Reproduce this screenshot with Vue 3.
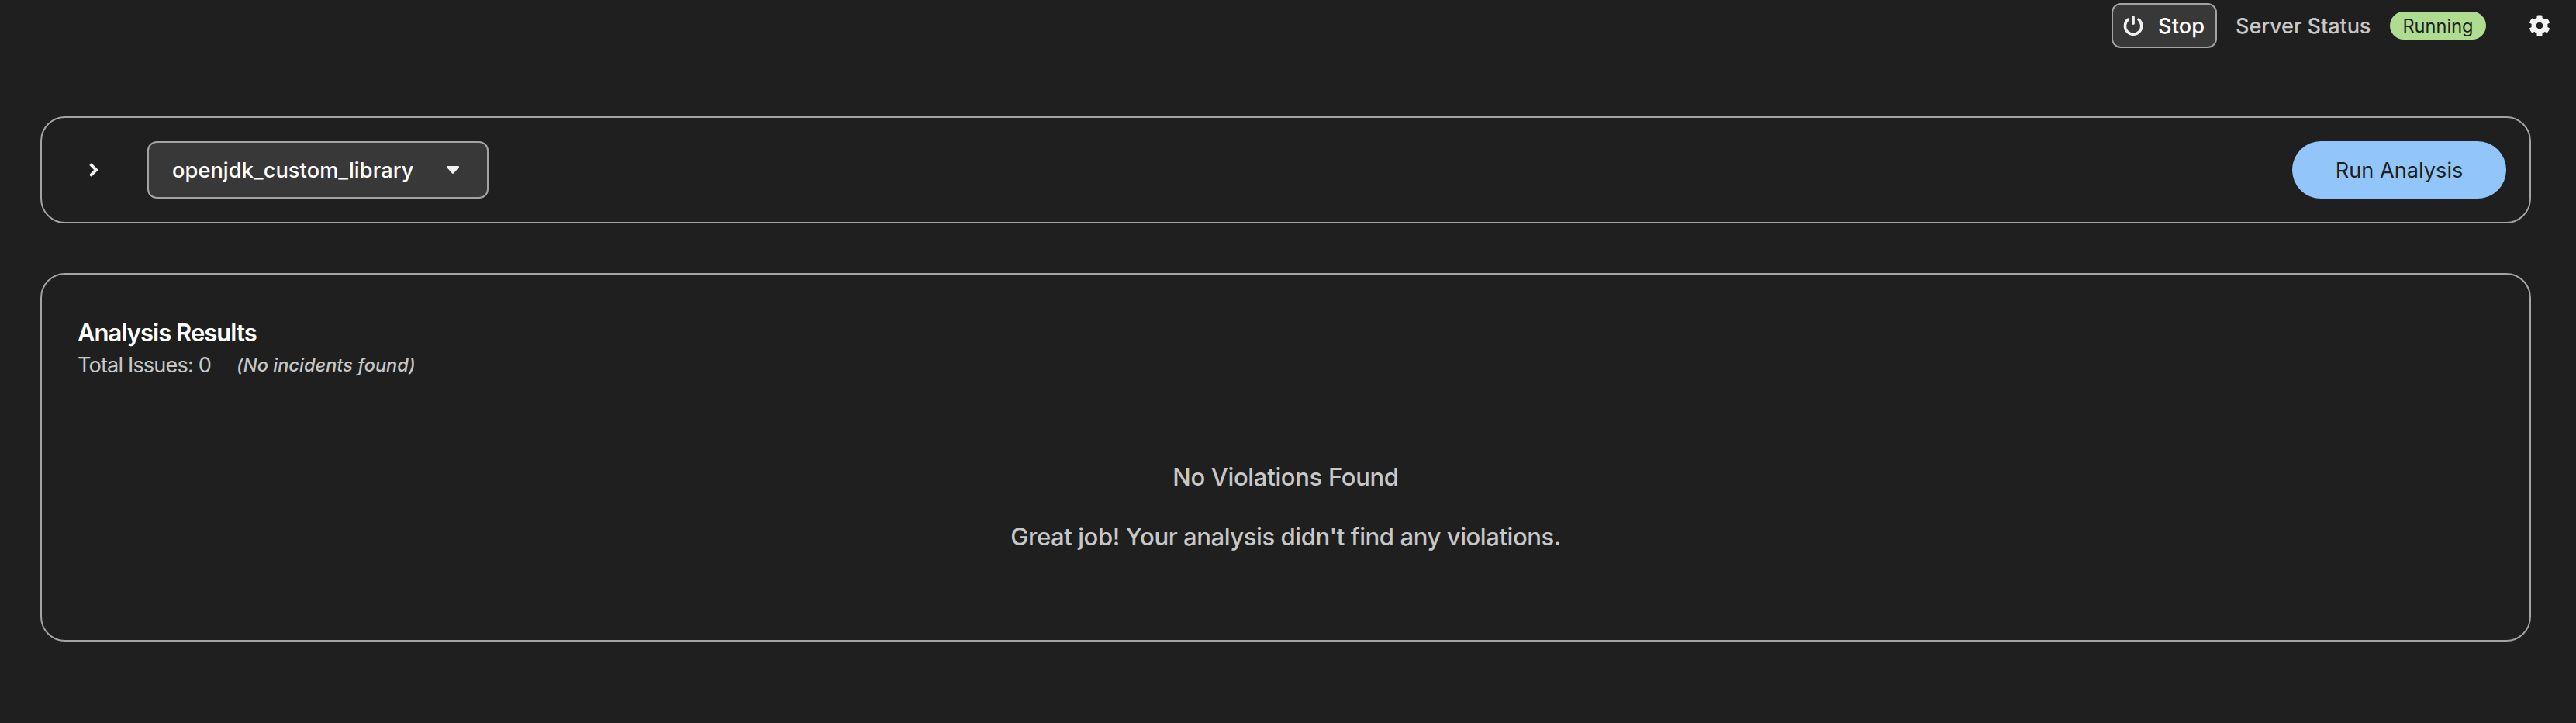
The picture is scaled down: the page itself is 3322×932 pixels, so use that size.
<script setup>
import { ref } from 'vue'

const profile = ref('openjdk_custom_library')
const totalIssues = ref(0)
</script>

<template>
  <div class="page">
    <header class="topbar">
      <button class="stop" type="button">
        <svg class="power" viewBox="0 0 26 26" fill="none" stroke="currentColor" stroke-width="3.5" stroke-linecap="round">
          <path d="M6.3 5.2A10.7 10.7 0 1 0 19.9 5.2" />
          <path d="M13.1 1.9V10.3" />
        </svg>
        <span>Stop</span>
      </button>
      <span class="status-label">Server Status</span>
      <span class="pill">Running</span>
      <svg class="gear" viewBox="0 0 512 512" fill="currentColor">
        <path d="M487.4 315.7l-42.6-24.6c4.3-23.2 4.3-47 0-70.2l42.6-24.6c4.9-2.8 7.1-8.6 5.5-14-11.1-35.6-30-67.8-54.7-94.6-3.8-4.1-10-5.1-14.8-2.3L380.8 110c-17.9-15.4-38.5-27.3-60.8-35.1V25.8c0-5.6-3.9-10.5-9.4-11.7-36.7-8.2-74.3-7.8-109.2 0-5.5 1.2-9.4 6.1-9.4 11.7V75c-22.2 7.9-42.8 19.8-60.8 35.1L88.7 85.5c-4.9-2.8-11-1.9-14.8 2.3-24.7 26.7-43.6 58.9-54.7 94.6-1.7 5.4.6 11.2 5.5 14L67.3 221c-4.3 23.2-4.3 47 0 70.2l-42.6 24.6c-4.9 2.8-7.1 8.6-5.5 14 11.1 35.6 30 67.8 54.7 94.6 3.8 4.1 10 5.1 14.8 2.3l42.6-24.6c17.9 15.4 38.5 27.3 60.8 35.1v49.2c0 5.6 3.9 10.5 9.4 11.7 36.7 8.2 74.3 7.8 109.2 0 5.5-1.2 9.4-6.1 9.4-11.7v-49.2c22.2-7.9 42.8-19.8 60.8-35.1l42.6 24.6c4.9 2.8 11 1.9 14.8-2.3 24.7-26.7 43.6-58.9 54.7-94.6 1.5-5.5-.7-11.3-5.6-14.1zM256 336c-44.1 0-80-35.9-80-80s35.9-80 80-80 80 35.9 80 80-35.9 80-80 80z" />
      </svg>
    </header>

    <section class="card toolbar">
      <svg class="chevron" viewBox="0 0 12 18" fill="none" stroke="currentColor" stroke-width="4" stroke-linecap="round">
        <path d="M2.7 2.7L9 9L2.7 15.3" />
      </svg>
      <button class="select" type="button">
        <span class="select-text">{{ profile }}</span>
        <svg class="caret" viewBox="0 0 16 10" fill="currentColor">
          <path d="M1.2 0H14.8C15.9 0 16.4 1.3 15.6 2.1L9.2 9.2C8.5 9.9 7.5 9.9 6.8 9.2L.4 2.1C-.4 1.3 .1 0 1.2 0Z" />
        </svg>
      </button>
      <button class="run" type="button">Run Analysis</button>
    </section>

    <section class="card results">
      <h2 class="title">Analysis Results</h2>
      <div class="summary">
        <span class="total">Total Issues: {{ totalIssues }}</span>
        <span class="note">(No incidents found)</span>
      </div>
      <div class="empty">
        <h3 class="empty-title">No Violations Found</h3>
        <p class="empty-text">Great job! Your analysis didn't find any violations.</p>
      </div>
    </section>
  </div>
</template>

<style>
body {
  background: #1f1f1f;
}
</style>

<style scoped>
.page,
.page * {
  box-sizing: border-box;
}
.page {
  height: 932px;
  background: #1f1f1f;
  color: #c7c7c7;
  font-family: Inter, "Liberation Sans", sans-serif;
  font-size: 27.2px;
  font-weight: 500;
  white-space: nowrap;
}
button {
  font: inherit;
  margin: 0;
}
.topbar {
  display: flex;
  justify-content: flex-end;
  align-items: center;
  height: 66px;
  padding-right: 33px;
}
.stop {
  display: flex;
  align-items: center;
  width: 136px;
  height: 58px;
  padding: 0 0 0 13px;
  border: 2px solid #a3a3a3;
  border-radius: 12px;
  background: #383838;
  color: #fff;
  letter-spacing: 0.1px;
}
.power {
  width: 26px;
  height: 26px;
  margin-right: 19px;
  color: #f2f2f2;
}
.status-label {
  width: 199px;
  margin-left: 24px;
  letter-spacing: -0.12px;
}
.pill {
  width: 124px;
  height: 36px;
  border-radius: 18px;
  background: #afdc8f;
  color: #1f1f1f;
  font-size: 23.6px;
  font-weight: 400;
  line-height: 37px;
  text-align: center;
}
.gear {
  width: 28px;
  height: 28px;
  margin-left: 55px;
  color: #f2f2f2;
}
.card {
  margin-left: 52px;
  margin-right: 58px;
  border: 2px solid #a3a3a3;
  border-radius: 32px;
}
.toolbar {
  display: flex;
  align-items: center;
  height: 138px;
  margin-top: 84px;
  padding: 0 30px 0 61px;
}
.chevron {
  width: 12px;
  height: 18px;
  color: #f2f2f2;
}
.select {
  display: flex;
  align-items: center;
  justify-content: space-between;
  width: 440px;
  height: 74px;
  margin-left: 63px;
  padding: 0 36px 0 30px;
  border: 2px solid #a3a3a3;
  border-radius: 12px;
  background: #383838;
  color: #fff;
}
.select-text {
  letter-spacing: 0.08px;
}
.caret {
  width: 16px;
  height: 10px;
  color: #f2f2f2;
}
.run {
  width: 276px;
  height: 74px;
  margin-left: auto;
  padding: 0;
  border: 0;
  border-radius: 37px;
  background: #92c5f9;
  color: #1f1f1f;
  font-weight: 400;
}
.results {
  height: 475px;
  margin-top: 64px;
  padding: 54px 46px 0;
}
.title {
  margin: 0;
  color: #fff;
  font-size: 31px;
  font-weight: 600;
  line-height: 42px;
  letter-spacing: -0.98px;
}
.summary {
  display: flex;
  align-items: center;
  height: 40px;
}
.total {
  width: 205px;
  font-size: 27.2px;
  font-weight: 400;
  letter-spacing: -0.88px;
}
.note {
  font-size: 23.5px;
  font-style: italic;
  letter-spacing: 0.04px;
}
.empty {
  display: flex;
  flex-direction: column;
  align-items: center;
  padding-top: 104px;
}
.empty-title {
  margin: 0;
  font-size: 31px;
  font-weight: 500;
  line-height: 42px;
  letter-spacing: -0.32px;
}
.empty-text {
  margin: 34px 0 0;
  font-size: 31.1px;
  line-height: 44px;
  letter-spacing: -0.45px;
}
</style>
